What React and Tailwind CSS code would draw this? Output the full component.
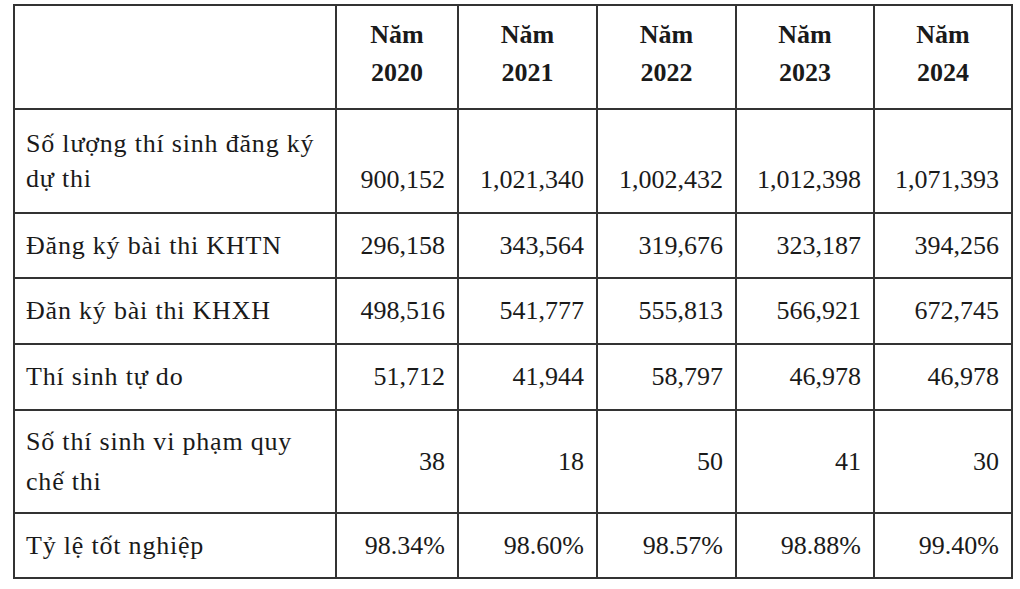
import React from 'react';

const years = ['2020', '2021', '2022', '2023', '2024'];

const rows = [
  { label: 'Số lượng thí sinh đăng ký dự thi', values: ['900,152', '1,021,340', '1,002,432', '1,012,398', '1,071,393'], h: 'h-[104px]', lead: 'leading-[35px]', bottom: true },
  { label: 'Đăng ký bài thi KHTN', values: ['296,158', '343,564', '319,676', '323,187', '394,256'], h: 'h-[65px]', lead: 'leading-[36px]' },
  { label: 'Đăn ký bài thi KHXH', values: ['498,516', '541,777', '555,813', '566,921', '672,745'], h: 'h-[66px]', lead: 'leading-[36px]' },
  { label: 'Thí sinh tự do', values: ['51,712', '41,944', '58,797', '46,978', '46,978'], h: 'h-[66px]', lead: 'leading-[36px]' },
  { label: 'Số thí sinh vi phạm quy chế thi', values: ['38', '18', '50', '41', '30'], h: 'h-[103px]', lead: 'leading-[40px]' },
  { label: 'Tỷ lệ tốt nghiệp', values: ['98.34%', '98.60%', '98.57%', '98.88%', '99.40%'], h: 'h-[65px]', lead: 'leading-[36px]' },
];

export default function App() {
  return (
    <div className="w-[1020px] h-[589px] bg-white overflow-hidden pt-[4px] pl-[13px]">
      <table className="table-fixed border-collapse text-[26px] text-[#1a1a1a] font-['Liberation_Serif']">
        <colgroup>
          <col className="w-[322px]" />
          <col className="w-[122px]" />
          <col className="w-[139px]" />
          <col className="w-[139px]" />
          <col className="w-[138px]" />
          <col className="w-[138px]" />
        </colgroup>
        <thead>
          <tr className="h-[104px]">
            <th className="border-2 border-[#333]"></th>
            {years.map(y => (
              <th key={y} className="border-2 border-[#333] text-center font-bold leading-[38px] align-middle pb-[6px]">
                Năm<br />{y}
              </th>
            ))}
          </tr>
        </thead>
        <tbody>
          {rows.map(r => (
            <tr key={r.label} className={r.h}>
              <td className={`border-2 border-[#333] pl-[11px] pr-[20px] text-left align-middle tracking-[0.8px] ${r.lead}`}>{r.label}</td>
              {r.values.map((v, i) => (
                <td key={i} className={`border-2 border-[#333] pr-[12px] text-right ${r.lead} ${r.bottom ? 'align-bottom pb-[15px]' : 'align-middle'}`}>
                  {v}
                </td>
              ))}
            </tr>
          ))}
        </tbody>
      </table>
    </div>
  );
}
